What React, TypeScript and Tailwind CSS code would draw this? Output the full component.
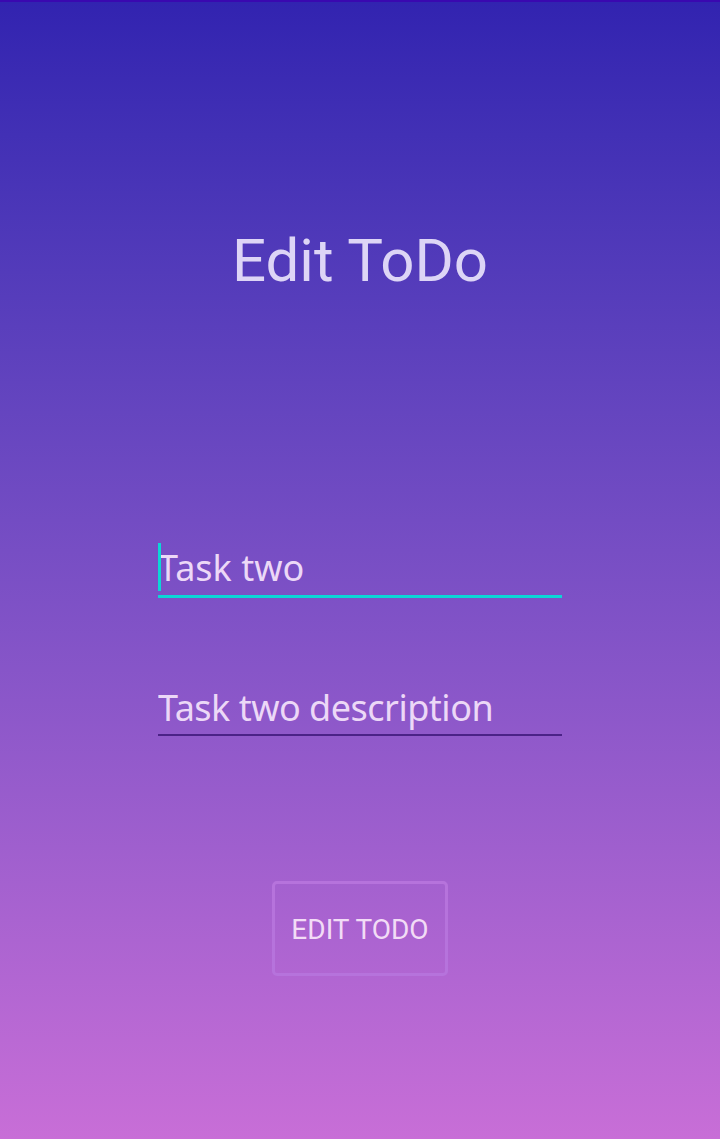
import { useState } from "react"

// Edit ToDo screen
const App = () => {
  const [title, setTitle] = useState("Task two")
  const [desc, setDesc] = useState("Task two description")

  return (
    <div className="w-[720px] h-[1139px] bg-gradient-to-b from-[#3223b0] to-[#c86ed7] border-t-2 border-[#3a08b0] flex flex-col items-center">
      <h1 className="mt-[224px] text-[60px] leading-[70px] text-[#ddd5f6] font-['Roboto',sans-serif]">
        Edit ToDo
      </h1>

      <div className="mt-[248px] w-[404px] relative">
        <input
          value={title}
          onChange={(e) => setTitle(e.target.value)}
          className="w-full h-[54px] pb-[4px] bg-transparent outline-none text-[36px] text-[#ecd8f7] font-['Noto_Sans',sans-serif] border-b-[3px] border-[#0cd6d6]"
        />
        <span className="absolute left-0 top-[-1px] w-[3px] h-[48px] bg-[#0cd6d6]" />
      </div>

      <div className="mt-[80px] w-[404px]">
        <input
          value={desc}
          onChange={(e) => setDesc(e.target.value)}
          className="w-full h-[58px] pt-[2px] bg-transparent outline-none text-[36px] tracking-[-0.5px] text-[#ecd8f7] font-['Noto_Sans',sans-serif] border-b-2 border-[#4b2287]"
        />
      </div>

      <button className="mt-[145px] w-[176px] h-[95px] pt-[3px] rounded-[5px] border-[3px] border-[#b673dc] text-[28px] text-[#f2dcf6] font-['Roboto',sans-serif]">
        EDIT TODO
      </button>
    </div>
  )
}

export default App
